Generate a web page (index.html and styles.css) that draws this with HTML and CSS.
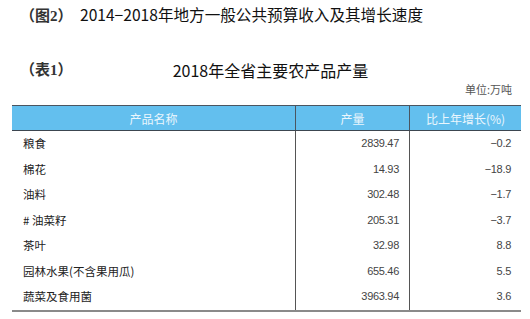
FILE: index.html
```html
<!DOCTYPE html>
<html lang="zh-CN">
<head>
  <meta charset="UTF-8">
  <title>2018年全省主要农产品产量</title>
  <link rel="stylesheet" href="styles.css">
</head>
<body>
<div class="page">
  <!-- 图2标题 -->
  <div class="fig-title">
    <span class="tag">（图2）</span><span class="title-text">2014−2018年地方一般公共预算收入及其增长速度</span>
  </div>

  <!-- 表1标题 -->
  <div class="tab-title">
    <span class="tag">（表1）</span>
    <span class="tab-name">2018年全省主要农产品产量</span>
    <span class="tag-space"></span>
  </div>
  <div class="unit">单位:万吨</div>

  <table class="data">
    <thead>
      <tr>
        <th class="c-name">产品名称</th>
        <th class="c-num">产量</th>
        <th class="c-rate">比上年增长(%)</th>
      </tr>
    </thead>
    <tbody>
      <tr><td class="name">粮食</td><td class="num">2839.47</td><td class="num">−0.2</td></tr>
      <tr><td class="name">棉花</td><td class="num">14.93</td><td class="num">−18.9</td></tr>
      <tr><td class="name">油料</td><td class="num">302.48</td><td class="num">−1.7</td></tr>
      <tr><td class="name"># 油菜籽</td><td class="num">205.31</td><td class="num">−3.7</td></tr>
      <tr><td class="name">茶叶</td><td class="num">32.98</td><td class="num">8.8</td></tr>
      <tr><td class="name">园林水果(不含果用瓜)</td><td class="num">655.46</td><td class="num">5.5</td></tr>
      <tr><td class="name">蔬菜及食用菌</td><td class="num">3963.94</td><td class="num">3.6</td></tr>
    </tbody>
  </table>
</div>
</body>
</html>
```

FILE: styles.css
```css
body {
  margin: 0;
  background-color: #fff;
  color: #222;
  font-family: "Noto Sans CJK SC", "Liberation Sans", sans-serif;
}

.page {
  width: 509px;
  padding: 4px 0 0 12px;
}

.tag {
  font-family: "Liberation Serif", "Noto Sans CJK SC", serif;
  font-weight: bold;
  font-size: 15px;
  color: #333;
}

.fig-title {
  padding-left: 8px;
  height: 20px;
  line-height: 20px;
  font-size: 15.6px;
  white-space: nowrap;
}

.fig-title .tag {
  display: inline-block;
  width: 60px;
}

.title-text {
  color: #111;
}

.tab-title {
  display: flex;
  margin-top: 36px;
  padding-left: 8px;
  height: 20px;
  line-height: 20px;
  font-size: 16px;
}

.tab-title .tag,
.tag-space {
  width: 52px;
}

.tab-name {
  flex: 1;
  text-align: center;
  color: #111;
}

.unit {
  height: 14px;
  line-height: 14px;
  margin-top: 2px;
  padding-right: 9px;
  text-align: right;
  font-size: 11px;
  color: #555;
}

.data {
  width: 509px;
  margin-top: 9px;
  border-collapse: collapse;
  table-layout: fixed;
  border-bottom: 2px solid #8a8a8a;
}

.data th {
  height: 24px;
  padding: 0;
  font-size: 12px;
  font-weight: normal;
  color: #eaf6fd;
  background-color: #63bfee;
  border-top: 1px solid #4a5560;
  border-bottom: 1px solid #3c4650;
}

.data th.c-name {
  width: 283px;
}

.data th.c-num {
  width: 113px;
  border-left: 1px solid #4a5560;
  border-right: 1px solid #4a5560;
}

.data td {
  height: 25.5px;
  padding: 0 10px;
  font-size: 12px;
  line-height: 25px;
}

.data td.name {
  padding-left: 11px;
  font-size: 11.5px;
  color: #222;
}

.data td.num {
  text-align: right;
  font-family: "Liberation Sans", "Noto Sans CJK SC", sans-serif;
  font-size: 11px;
  color: #444;
  letter-spacing: -0.3px;
}

.data td + td {
  border-left: 1px solid #555;
}
```
